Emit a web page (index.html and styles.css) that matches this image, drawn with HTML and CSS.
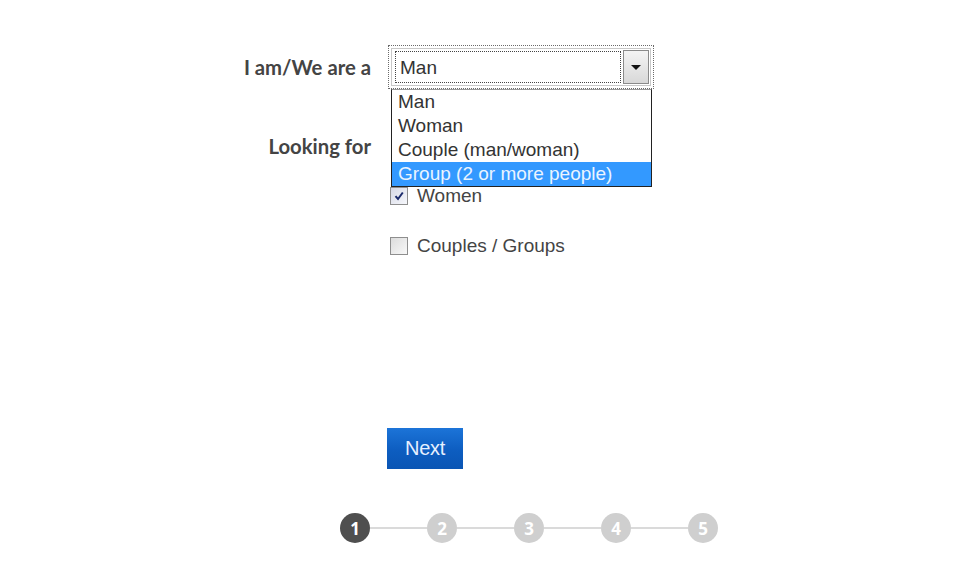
FILE: index.html
```html
<!DOCTYPE html>
<html>
<head>
<meta charset="utf-8">
<link rel="stylesheet" href="styles.css">
</head>
<body>
<div class="page">
  <div class="form">
    <div class="label label-iam">I am/We are a</div>
    <div class="field">
      <div class="select">
        <div class="select-inner">
          <div class="select-value">Man</div>
          <div class="select-btn"><span class="arrow"></span></div>
        </div>
        <ul class="dropdown">
          <li>Man</li>
          <li>Woman</li>
          <li>Couple (man/woman)</li>
          <li class="active">Group (2 or more people)</li>
        </ul>
      </div>
    </div>

    <div class="label label-looking">Looking for</div>
    <div class="field checks">
      <label class="check"><span class="box checked"><svg viewBox="0 0 12 12" width="12" height="12"><path d="M2.5 6.2 L5 9 L9.8 2.5" fill="none" stroke="#1b2a6b" stroke-width="2"/></svg></span><span>Women</span></label>
      <label class="check"><span class="box"></span><span>Couples / Groups</span></label>
    </div>
  </div>

  <div class="actions">
    <button class="next">Next</button>
  </div>

  <div class="steps">
    <span class="step current">1</span><span class="line"></span>
    <span class="step">2</span><span class="line"></span>
    <span class="step">3</span><span class="line"></span>
    <span class="step">4</span><span class="line"></span>
    <span class="step">5</span>
  </div>
</div>
</body>
</html>
```

FILE: styles.css
```css
html, body {
  margin: 0;
  padding: 0;
  background: #ffffff;
}

.page {
  width: 960px;
  height: 561px;
  padding-top: 45px;
  box-sizing: border-box;
  font-family: Arial, "Liberation Sans", sans-serif;
  color: #333;
}

.form {
  display: grid;
  grid-template-columns: 371px 1fr;
  column-gap: 17px;
  row-gap: 45px;
}

.label {
  font-family: Lato, "Open Sans", sans-serif;
  font-weight: 700;
  font-size: 20.3px;
  color: #444;
  text-align: right;
  line-height: 24px;
}

.label-iam {
  padding-top: 10px;
}

.label-looking {
  padding-top: 0;
}

.field {
  position: relative;
}

.select {
  position: relative;
  width: 266px;
  height: 44px;
  box-sizing: border-box;
  border: 1px dotted #6a6a6a;
  padding: 2px;
}

.select-inner {
  display: flex;
  align-items: stretch;
  height: 38px;
  box-sizing: border-box;
  border: 1px solid #c8c8c8;
  padding: 1px 1px 1px 3px;
  gap: 2px;
}

.select-value {
  flex: 1;
  border: 1px dotted #444;
  margin: 1px 0;
  font-size: 19px;
  line-height: 31px;
  padding-left: 4px;
  color: #333;
}

.select-btn {
  width: 26px;
  box-sizing: border-box;
  border: 1px solid #8a8a8a;
  background: linear-gradient(#f4f4f4, #d8d8d8);
  display: flex;
  align-items: center;
  justify-content: center;
}

.arrow {
  width: 0;
  height: 0;
  border-left: 5px solid transparent;
  border-right: 5px solid transparent;
  border-top: 5px solid #111;
}

.dropdown {
  position: absolute;
  left: 2px;
  top: 43px;
  width: 261px;
  box-sizing: border-box;
  margin: 0;
  padding: 0;
  list-style: none;
  background: #fff;
  border: 1px solid #222;
  border-top: 1px solid #999;
  z-index: 5;
}

.dropdown li {
  height: 24px;
  line-height: 24px;
  font-size: 19px;
  padding-left: 6px;
  color: #333;
}

.dropdown li.active {
  background: #3399ff;
  color: #eaf4ff;
}

.checks {
  display: flex;
  flex-direction: column;
  gap: 26px;
  padding-top: 50px;
}

.check {
  display: flex;
  align-items: center;
  gap: 9px;
  height: 24px;
  font-size: 19px;
  color: #444;
  padding-left: 2px;
}

.box {
  width: 18px;
  height: 18px;
  box-sizing: border-box;
  border: 1px solid #8e8e8e;
  background: linear-gradient(135deg, #dcdcdc, #f8f8f8);
  display: flex;
  align-items: center;
  justify-content: center;
}

.box.checked {
  background: linear-gradient(135deg, #d6d9e6, #f6f7fb);
}

.actions {
  margin-top: 170px;
  padding-left: 387px;
}

.next {
  width: 76px;
  height: 41px;
  border: none;
  padding: 0;
  background: linear-gradient(#1c74d8, #0d5dc0 55%, #0a55b4);
  color: #e6f0ff;
  font-family: Arial, "Liberation Sans", sans-serif;
  font-size: 20px;
  letter-spacing: -0.3px;
}

.steps {
  display: flex;
  align-items: center;
  margin-top: 44px;
  margin-left: 340px;
  width: 378px;
}

.step {
  width: 30px;
  height: 30px;
  border-radius: 50%;
  background: #cfcfcf;
  color: #fff;
  font-family: "Open Sans", Arial, sans-serif;
  font-weight: 700;
  font-size: 17px;
  display: flex;
  align-items: center;
  justify-content: center;
  flex: none;
}

.step.current {
  background: #4f4f4f;
}

.line {
  flex: 1;
  height: 2px;
  background: #dadada;
}
```
